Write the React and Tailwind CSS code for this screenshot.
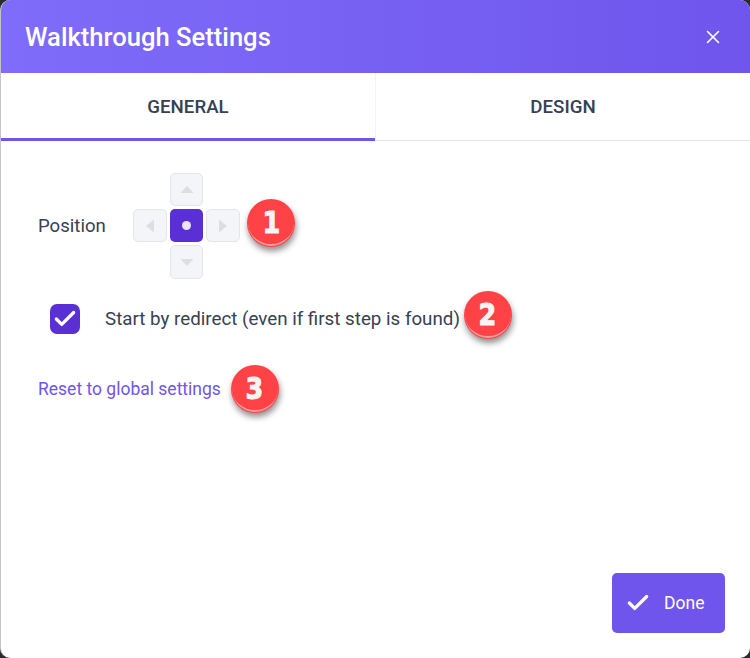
import React from 'react'
import { X, Check } from 'lucide-react'

const Badge = ({ n, className }) => (
  <div className={`relative flex h-[48px] w-[48px] shrink-0 items-center justify-center rounded-full bg-[#fe4246] shadow-[1px_4px_6px_rgba(0,0,0,0.45)] ${className || ''}`}>
    <span className="scale-x-[0.85] text-[30px] leading-none font-bold text-[#f7f4f4] [-webkit-text-stroke:1px_#f7f4f4] font-['DejaVu_Sans',sans-serif]">{n}</span>
    <div className="absolute inset-[1px] rounded-full border-b-2 border-[#ff9c9d]" />
  </div>
)

const Arrow = ({ points }) => (
  <svg width="16" height="16" viewBox="0 0 16 16">
    <polygon points={points} fill="#dcdee1" />
  </svg>
)

const PadButton = ({ children }) => (
  <div className="flex h-full w-full items-center justify-center rounded-[5px] border border-[#e3e5e8] bg-[#f3f5f8]">
    {children}
  </div>
)

const App = () => {
  return (
    <div className="h-[658px] w-[750px] bg-[#2b2b2b] font-['Roboto',sans-serif]">
      <div className="flex h-full flex-col overflow-hidden rounded-[10px] border-l border-[#c4c4c8] bg-white">
        <div className="-ml-px flex h-[73px] shrink-0 items-center justify-between bg-gradient-to-r from-[#7f6cfa] to-[#6f55ec] pr-[26px] pl-[25px]">
          <h1 className="pt-[2px] text-[25.6px] font-medium text-white">Walkthrough Settings</h1>
          <X className="h-[22px] w-[22px] text-white" strokeWidth={1.75} />
        </div>

        <div className="flex h-[68px] shrink-0 border-b border-[#e4e4e7]">
          <div className="-mb-px flex w-[374px] items-center justify-center border-b-[3px] border-[#6f55ec] pt-[3px] text-[18.7px] font-medium text-[#374151]">
            GENERAL
          </div>
          <div className="flex flex-1 items-center justify-center border-l border-[#f3f3f4] pt-[2px] text-[18.7px] font-medium text-[#374151]">
            DESIGN
          </div>
        </div>

        <div className="flex flex-1 flex-col pt-[32px] pr-[25px] pb-[25px] pl-[37px]">
          <div className="flex items-center">
            <span className="w-[95px] pt-[2px] text-[18.6px] text-[#374151]">Position</span>
            <div className="grid grid-cols-[34px_33px_34px] grid-rows-[33px_33px_34px] gap-[3px]">
              <div className="col-start-2">
                <PadButton><Arrow points="1.5,11 14.5,11 8,4" /></PadButton>
              </div>
              <div className="col-start-1 row-start-2">
                <PadButton><Arrow points="12,1.5 12,14.5 4,8" /></PadButton>
              </div>
              <div className="col-start-2 row-start-2 flex items-center justify-center rounded-[5px] bg-[#5a2fd3]">
                <div className="h-[9px] w-[9px] rounded-full bg-[#e8e6f5]" />
              </div>
              <div className="col-start-3 row-start-2">
                <PadButton><Arrow points="4,1.5 4,14.5 12,8" /></PadButton>
              </div>
              <div className="col-start-2 row-start-3">
                <PadButton><Arrow points="1.5,5 14.5,5 8,12" /></PadButton>
              </div>
            </div>
            <Badge n="1" className="mb-[7px] ml-[7px]" />
          </div>

          <div className="mt-[12px] flex items-center">
            <div className="mt-[8px] ml-[12px] flex h-[30px] w-[30px] items-center justify-center rounded-[7px] bg-[#5a2fd3]">
              <Check className="h-[26px] w-[26px] text-white" strokeWidth={3} />
            </div>
            <span className="mt-[8px] ml-[25px] text-[18.75px] text-[#374151]">Start by redirect (even if first step is found)</span>
            <Badge n="2" className="ml-[4px]" />
          </div>

          <div className="mt-[26px] flex items-center">
            <span className="text-[17.5px] text-[#6f55ec]">Reset to global settings</span>
            <Badge n="3" className="ml-[10px]" />
          </div>

          <div className="mt-auto flex justify-end">
            <button className="flex h-[60px] w-[113px] items-center rounded-[5px] bg-[#6f55ec] pl-[13px] text-[17.5px] text-white">
              <Check className="h-[26px] w-[26px]" strokeWidth={3} />
              <span className="ml-[13px]">Done</span>
            </button>
          </div>
        </div>
      </div>
    </div>
  )
}

export default App
